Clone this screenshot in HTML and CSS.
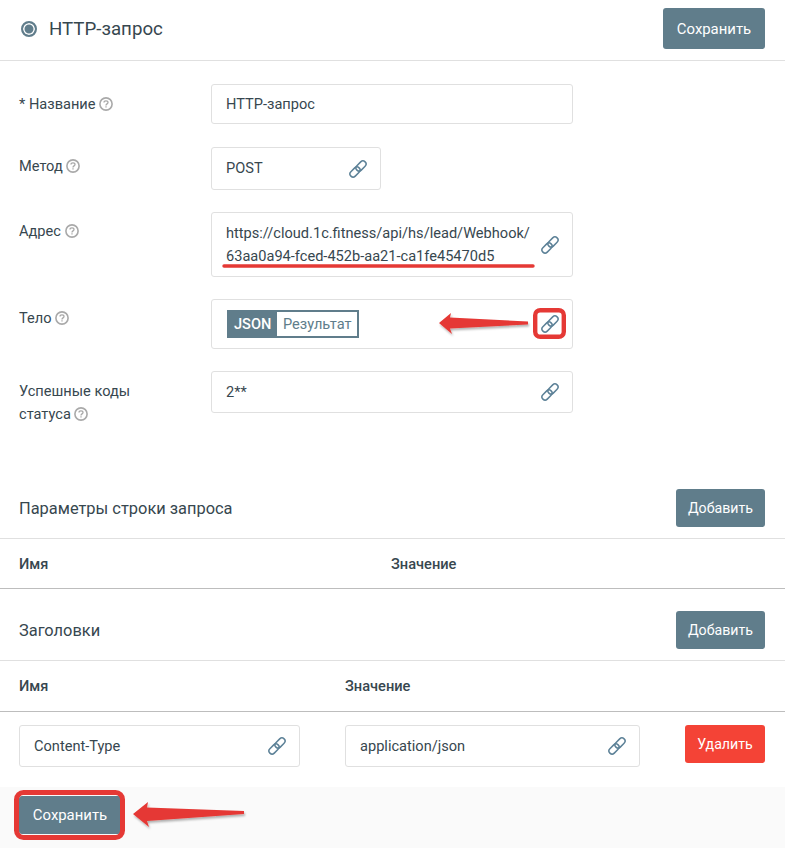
FILE: index.html
```html
<!DOCTYPE html>
<html lang="ru">
<head>
<meta charset="utf-8">
<title>HTTP-запрос</title>
<link rel="stylesheet" href="styles.css">
</head>
<body>
<svg width="0" height="0" class="defs">
  <defs>
    <symbol id="link" viewBox="0 0 18 18">
      <g fill="none" stroke="#5c8197" stroke-width="1.5">
        <rect x="8.9" y="0.2" width="6.2" height="11.6" rx="3.1" transform="rotate(45 12 6)"/>
        <rect x="2.9" y="6.2" width="6.2" height="11.6" rx="3.1" transform="rotate(45 6 12)"/>
      </g>
    </symbol>
    <symbol id="help" viewBox="0 0 14 14">
      <circle cx="7" cy="7" r="6.1" fill="none" stroke="#a9a9a9" stroke-width="1.6"/>
      <path d="M5 5.6c0-1.1.9-1.7 2-1.7s2 .6 2 1.6c0 1.4-2 1.4-2 2.9M7 9.2v1.3" fill="none" stroke="#a9a9a9" stroke-width="1.3"/>
    </symbol>
  </defs>
</svg>
<div class="page">
  <header class="top">
    <div class="title"><span class="radio"></span><h1>HTTP-запрос</h1></div>
    <button class="btn save-top">Сохранить</button>
  </header>

  <section class="form">
    <div class="row row-name">
      <label class="lbl">* Название <svg class="help"><use href="#help"/></svg></label>
      <div class="input w-full h40"><span>HTTP-запрос</span></div>
    </div>
    <div class="row row-method">
      <label class="lbl">Метод <svg class="help"><use href="#help"/></svg></label>
      <div class="input w-small h43"><span class="up1">POST</span><svg class="link"><use href="#link"/></svg></div>
    </div>
    <div class="row row-addr">
      <label class="lbl">Адрес <svg class="help"><use href="#help"/></svg></label>
      <div class="input w-full h65"><span class="addr">https://cloud.1c.fitness/api/hs/lead/Webhook/<br>63aa0a94-fced-452b-aa21-ca1fe45470d5</span><svg class="link"><use href="#link"/></svg></div>
    </div>
    <div class="row row-body">
      <label class="lbl">Тело <svg class="help"><use href="#help"/></svg></label>
      <div class="input w-full h50">
        <div class="toggle"><span class="on">JSON</span><span class="off">Результат</span></div>
        <svg class="link"><use href="#link"/></svg>
      </div>
    </div>
    <div class="row row-codes">
      <label class="lbl two">Успешные коды<br>статуса <svg class="help"><use href="#help"/></svg></label>
      <div class="input w-full h42"><span>2**</span><svg class="link"><use href="#link"/></svg></div>
    </div>
  </section>

  <section class="sect sect-params">
    <div class="sect-head"><h2>Параметры строки запроса</h2><button class="btn add">Добавить</button></div>
    <div class="thead thead-a"><b>Имя</b><b>Значение</b></div>
  </section>

  <section class="sect sect-headers">
    <div class="sect-head"><h2>Заголовки</h2><button class="btn add">Добавить</button></div>
    <div class="thead thead-b"><b>Имя</b><b>Значение</b></div>
    <div class="hrow">
      <div class="input w-key h42"><span>Content-Type</span><svg class="link"><use href="#link"/></svg></div>
      <div class="input w-val h42"><span>application/json</span><svg class="link"><use href="#link"/></svg></div>
      <button class="btn del">Удалить</button>
    </div>
  </section>

  <footer class="foot"><button class="btn save-bottom">Сохранить</button></footer>

  <svg class="notes" width="785" height="848" viewBox="0 0 785 848">
    <defs>
      <filter id="sh" x="-20%" y="-50%" width="140%" height="200%"><feDropShadow dx="1" dy="2" stdDeviation="1.2" flood-color="#000" flood-opacity=".3"/></filter>
    </defs>
    <path d="M224 266H533" stroke="#e53935" stroke-width="3.4" stroke-linecap="round" fill="none"/>
    <rect x="535.2" y="310.2" width="28.6" height="26.6" rx="5" fill="none" stroke="#e53935" stroke-width="4.4"/>
    <path d="M439 323L451 313L450 317.5L528 321.5V324.5L450 328.5L452 334Z" fill="#e53935" filter="url(#sh)"/>
    <rect x="16.5" y="792.5" width="106" height="45" rx="7" fill="none" stroke="#e53935" stroke-width="5"/>
    <path d="M133 814L148 802L147 807.5L244 811V814L147 821L149 827Z" fill="#e53935" filter="url(#sh)"/>
  </svg>
</div>
</body>
</html>
```
FILE: styles.css
```css
* { box-sizing: border-box; }
html, body { margin: 0; padding: 0; background: #fff; }
body { font-family: Roboto, "Noto Sans", sans-serif; font-size: 14.6px; color: #37474f; }
.defs { position: absolute; }
.page { position: relative; width: 785px; height: 848px; overflow: hidden; }
.top { height: 61px; border-bottom: 1px solid #e0e0e0; padding: 8px 20px 0 21px; display: flex; justify-content: space-between; align-items: flex-start; }
.title { display: flex; align-items: center; height: 41px; }
.radio { width: 16px; height: 16px; border-radius: 50%; border: 2px solid #607d8b; background: #607d8b; box-shadow: inset 0 0 0 1.5px #fff; margin: 1px 12px 0 0; }
h1 { margin: 0; font-size: 18.7px; font-weight: 400; color: #37474f; }
h2 { margin: 0; font-size: 16.4px; font-weight: 400; color: #37474f; }
.btn { font: 400 14.9px Roboto, sans-serif; color: #fff; background: #607d8b; border: 0; border-radius: 3px; height: 38px; padding: 0; }
.save-top { width: 102px; height: 41px; }
.form { padding: 23px 0 0 19px; }
.row { display: flex; align-items: flex-start; }
.lbl { width: 192px; font-size: 14.6px; line-height: 23px; color: #37474f; display: block; }
.row-name { margin-bottom: 23px; }
.row-name .lbl { padding-top: 9px; }
.row-method { margin-bottom: 22px; }
.row-method .lbl { padding-top: 8px; }
.row-addr { margin-bottom: 22px; }
.row-addr .lbl { padding-top: 8px; }
.row-body { margin-bottom: 22px; }
.row-body .lbl { padding-top: 8px; }
.row-codes .lbl { padding-top: 9px; }
.help { width: 14px; height: 14px; vertical-align: -2px; }
.input { border: 1px solid #e0e0e0; border-radius: 3px; background: #fff; display: flex; align-items: center; justify-content: space-between; padding: 0 13px 0 14px; color: #37474f; flex: none; }
.up1 { margin-top: -2px; }
.w-full { width: 362px; }
.w-small { width: 170px; }
.w-key { width: 281px; }
.w-val { width: 295px; }
.h40 { height: 40px; }
.h42 { height: 42px; }
.h43 { height: 43px; }
.h50 { height: 50px; }
.h65 { height: 65px; }
.addr { line-height: 23px; white-space: nowrap; }
.link { width: 18px; height: 18px; flex: none; }
.toggle { display: flex; height: 28px; margin-left: 1px; border: 2px solid #607d8b; }
.toggle span { display: flex; align-items: center; }
.on { background: #607d8b; color: #fff; font-weight: 500; padding: 0 5px; width: 48px; }
.off { color: #607d8b; padding: 0 5px 0 6px; }
.sect-params { margin-top: 63px; }
.sect-head { display: flex; justify-content: space-between; align-items: center; padding: 0 20px 0 19px; height: 38px; }
.add { width: 89px; font-size: 14.2px; }
.thead { margin-top: 11px; height: 51px; border-top: 1px solid #e0e0e0; border-bottom: 1px solid #bdbdbd; display: flex; align-items: center; padding-left: 19px; }
.thead b { font-weight: 500; color: #37474f; }
.thead-a b:first-child { width: 372px; }
.thead-b { height: 52px; }
.thead-b b:first-child { width: 326px; }
.sect-headers { margin-top: 22px; }
.hrow { display: flex; align-items: flex-start; padding: 13px 20px 0 19px; height: 75px; }
.hrow .w-key { margin-right: 45px; }
.hrow .w-val { margin-right: 45px; }
.del { background: #f44336; width: 80px; font-size: 14.2px; }
.foot { background: #fafafa; height: 61px; padding: 9px 0 0 19px; }
.save-bottom { width: 102px; }
.notes { position: absolute; left: 0; top: 0; pointer-events: none; }
```
